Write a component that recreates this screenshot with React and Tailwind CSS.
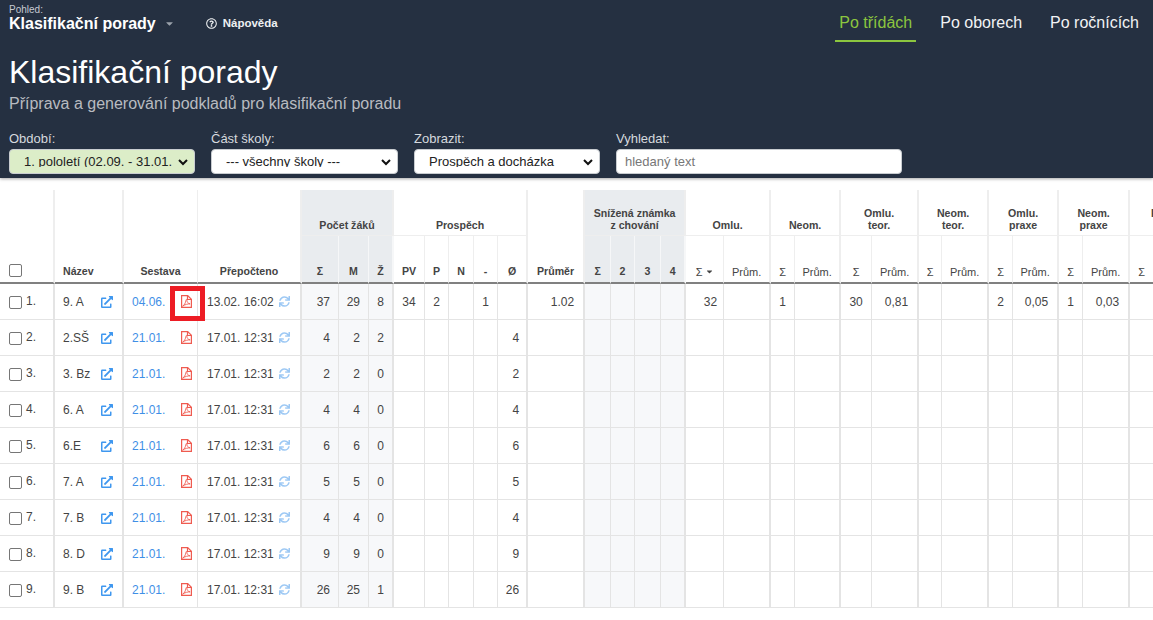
import { FaExternalLinkAlt, FaSync, FaRegQuestionCircle, FaCaretDown } from "react-icons/fa";

const widths = [55, 69, 74, 104, 37, 30, 25, 31, 24, 25, 24, 30, 57, 26, 24, 26, 25, 38, 47, 24, 46, 31, 47, 23, 47, 24, 46, 24, 47, 24, 48];

const groups = [
  { label: "Počet žáků", span: 3, shade: true },
  { label: "Prospěch", span: 5 },
  { label: "", span: 1, noBottom: true },
  { label: ["Snížená známka", "z chování"], span: 4, shade: true },
  { label: "Omlu.", span: 2 },
  { label: "Neom.", span: 2 },
  { label: ["Omlu.", "teor."], span: 2 },
  { label: ["Neom.", "teor."], span: 2 },
  { label: ["Omlu.", "praxe"], span: 2 },
  { label: ["Neom.", "praxe"], span: 2 },
  { label: ["Pozd.", "teor."], span: 2 },
];

const rows = [
  { n: "1.", name: "9. A", report: "04.06.", calc: "13.02. 16:02", z: ["37", "29", "8"], first: true },
  { n: "2.", name: "2.SŠ", report: "21.01.", calc: "17.01. 12:31", z: ["4", "2", "2"], o: "4" },
  { n: "3.", name: "3. Bz", report: "21.01.", calc: "17.01. 12:31", z: ["2", "2", "0"], o: "2" },
  { n: "4.", name: "6. A", report: "21.01.", calc: "17.01. 12:31", z: ["4", "4", "0"], o: "4" },
  { n: "5.", name: "6.E", report: "21.01.", calc: "17.01. 12:31", z: ["6", "6", "0"], o: "6" },
  { n: "6.", name: "7. A", report: "21.01.", calc: "17.01. 12:31", z: ["5", "5", "0"], o: "5" },
  { n: "7.", name: "7. B", report: "21.01.", calc: "17.01. 12:31", z: ["4", "4", "0"], o: "4" },
  { n: "8.", name: "8. D", report: "21.01.", calc: "17.01. 12:31", z: ["9", "9", "0"], o: "9" },
  { n: "9.", name: "9. B", report: "21.01.", calc: "17.01. 12:31", z: ["26", "25", "1"], o: "26" },
];

// sloupce za "Přepočteno": index -> hodnoty prvniho radku
const firstRow = {
  7: ["34", "c"], 8: ["2", "c"], 10: ["1", "c"], 12: ["1.02", "r"], 17: ["32", "s"], 19: ["1", "c"],
  21: ["30", "c"], 22: ["0,81", "r"], 25: ["2", "c"], 26: ["0,05", "r"], 27: ["1", "c"], 28: ["0,03", "r"],
};

const align = { c: "text-center", r: "text-right pr-[9px]", s: "text-right pr-[6px]" };

const thick = new Set([0, 1, 3, 6, 11, 12, 16, 18, 20, 22, 24, 26, 28]);
const shaded = new Set([4, 5, 6, 13, 14, 15, 16]);
const subHead = ["Σ", "M", "Ž", "PV", "P", "N", "-", "Ø", "Průměr", "Σ", "2", "3", "4", "Σ", "Prům.", "Σ", "Prům.", "Σ", "Prům.", "Σ", "Prům.", "Σ", "Prům.", "Σ", "Prům.", "Σ", "Prům."];

function PdfIcon() {
  return (
    <svg viewBox="0 0 11 13" className="w-[11px] h-[13px] text-[#ef5b50]" fill="none" stroke="currentColor" strokeWidth="1.2">
      <path d="M.6.6h6.1l3.7 3.7v8.1H.6z" />
      <path d="M6.5.6v3.9h3.9" />
      <path d="M1.6 11.2c1.5-.8 3-3.2 3.4-6 .1-1 .9-1 .9 0 0 1.6.9 3.2 3.2 3.7-1.9-.2-5 .5-7.5 2.3z" strokeWidth=".9" />
    </svg>
  );
}

function Select({ label, value, width, green }) {
  return (
    <label className="flex flex-col">
      <span className="text-[13px] leading-[16px] text-[#d5d9de] mb-[2px]">{label}</span>
      <span className={`flex items-center h-[25px] rounded-[4px] border border-[#c8ccd0] overflow-hidden pl-[14px] pr-[5px] ${width} ${green ? "bg-[#dcedc8]" : "bg-white"}`}>
        <span className="flex-1 self-start h-[17px] whitespace-nowrap overflow-hidden text-[13px] leading-[23px] text-[#222]">{value}</span>
        <svg viewBox="0 0 12 12" className="w-[12px] h-[12px] shrink-0 ml-1 text-[#111]">
          <path d="M2 4l4 4 4-4" fill="none" stroke="currentColor" strokeWidth="2" />
        </svg>
      </span>
    </label>
  );
}

export default function App() {
  return (
    <div className="w-[1153px] h-[620px] overflow-hidden bg-white font-['Liberation_Sans',Arial,sans-serif] text-[#444]">
      <header className="h-[178px] bg-[#253041] shadow-[0_1px_3px_rgba(0,0,0,0.35)] px-[9px] flex flex-col relative">
        <div className="flex items-start h-[42px]">
          <div className="pt-[5px]">
            <div className="text-[10px] leading-[10px] text-[#c5cad1]">Pohled:</div>
            <div className="flex items-center text-[16px] leading-[17px] font-bold text-white">
              Klasifikační porady
              <FaCaretDown className="ml-[8px] text-[#9aa1ab] text-[11px]" />
            </div>
          </div>
          <div className="flex items-center ml-[31px] mt-[16px] text-[11.5px] leading-[14px] font-bold text-[#eef0f2]">
            <FaRegQuestionCircle className="mr-[6px] text-[11px]" />
            Nápověda
          </div>
          <nav className="ml-auto flex text-[16px] text-[#f2f3f5] mr-[-9px]">
            <a className="w-[81px] h-[42px] leading-[45px] text-center text-[#8cc63f] border-b-2 border-[#8cc63f]">Po třídách</a>
            <a className="ml-[24px] leading-[45px]">Po oborech</a>
            <a className="ml-[28px] mr-[14px] leading-[45px]">Po ročnících</a>
          </nav>
        </div>
        <h1 className="mt-[11px] text-[32px] leading-[38px] text-white">Klasifikační porady</h1>
        <p className="text-[16px] leading-[20px] text-[#b8bbc0] mt-[3px]">Příprava a generování podkladů pro klasifikační poradu</p>
        <div className="flex mt-[17px] gap-[16px]">
          <Select label="Období:" value="1. pololetí (02.09. - 31.01." width="w-[186px]" green />
          <Select label="Část školy:" value="--- všechny školy ---" width="w-[187px]" />
          <Select label="Zobrazit:" value="Prospěch a docházka" width="w-[186px]" />
          <label className="flex flex-col">
            <span className="text-[13px] leading-[16px] text-[#d5d9de] mb-[2px]">Vyhledat:</span>
            <input readOnly placeholder="hledaný text" className="w-[286px] h-[25px] rounded-[4px] border border-[#c8ccd0] bg-white pl-[8px] pr-[7px] pb-[1px] text-[13px] outline-none placeholder:text-[#777]" />
          </label>
        </div>
      </header>

      <table className="mt-[12px] table-fixed border-separate border-spacing-0 w-[1201px] text-[12px]">
        <colgroup>
          {widths.map((w, i) => (
            <col key={i} style={{ width: w }} />
          ))}
        </colgroup>
        <thead className="text-[#444]">
          <tr className="h-[46px]">
            {[0, 1, 2, 3].map((i) => (
              <th key={i} className={thick.has(i) ? "border-r-2 border-[#eeeeee]" : "border-r border-[#eeeeee]"} />
            ))}
            {groups.map((g, i) => (
              <th
                key={i}
                colSpan={g.span}
                className={`align-bottom pb-[4px] text-[10.6px] leading-[12px] font-bold border-r-2 border-[#eeeeee] ${g.noBottom ? "" : "border-b"} ${g.shade ? "bg-[#e9ecef]" : ""}`}
              >
                {Array.isArray(g.label) ? g.label.map((l) => <div key={l}>{l}</div>) : g.label}
              </th>
            ))}
          </tr>
          <tr className="h-[48px]">
            <th className="border-b-2 border-b-[#808080] border-r-2 border-r-[#eeeeee] text-left pl-[9px] align-bottom pb-[5px]">
              <span className="block w-[13px] h-[13px] rounded-[2px] border border-[#767676] bg-white" />
            </th>
            <th className="border-b-2 border-b-[#808080] border-r-2 border-r-[#eeeeee] text-left pl-[8px] align-bottom pb-[2px] text-[10.6px] font-bold">Název</th>
            <th className="border-b-2 border-b-[#808080] border-r border-r-[#eeeeee] align-bottom pb-[2px] text-[10.6px] font-bold">Sestava</th>
            <th className="border-b-2 border-b-[#808080] border-r-2 border-r-[#eeeeee] align-bottom pb-[2px] text-[10.6px] font-bold">Přepočteno</th>
            {subHead.map((h, idx) => {
              const i = idx + 4;
              const bold = i < 17;
              return (
                <th
                  key={i}
                  className={`border-b-2 border-b-[#808080] align-bottom pb-[2px] ${bold ? "font-bold text-[10.6px]" : "font-normal text-[11px]"} ${thick.has(i) ? "border-r-2" : "border-r"} ${shaded.has(i) ? "bg-[#e9ecef] border-r-[#f6f7f8]" : "border-r-[#eeeeee]"}`}
                >
                  {i === 17 ? (
                    <span className="inline-flex items-center justify-center">
                      Σ
                      <FaCaretDown className="ml-[2px] text-[9px]" />
                    </span>
                  ) : (
                    h
                  )}
                </th>
              );
            })}
          </tr>
        </thead>
        <tbody className="text-[12px]">
          {rows.map((r) => (
            <tr key={r.n} className="h-[36px]">
              <td className="border-b border-[#e4e4e4] border-r-2 border-r-[#e4e4e4] pl-[9px]">
                <span className="flex items-start">
                  <span className="block w-[13px] h-[13px] rounded-[2px] border border-[#767676] bg-white mt-[1px]" />
                  <span className="ml-[4px] text-[12px] leading-[12px]">{r.n}</span>
                </span>
              </td>
              <td className="border-b border-[#e4e4e4] border-r-2 border-r-[#e4e4e4] pl-[8px] pr-[9px]">
                <span className="flex items-center justify-between">
                  {r.name}
                  <FaExternalLinkAlt className="text-[12px] text-[#3f97ef]" />
                </span>
              </td>
              <td className="border-b border-[#e4e4e4] border-r border-r-[#e4e4e4] pl-[8px] pr-[5px]">
                <span className="flex items-center justify-between text-[#3f8fe6]">
                  {r.report}
                  <span className="relative block w-[11px] h-[13px]">
                    <PdfIcon />
                    {r.first && <span className="absolute left-[-11px] top-[-9px] w-[35px] h-[35px] border-[5px] border-[#ed1c24]" />}
                  </span>
                </span>
              </td>
              <td className="border-b border-[#e4e4e4] border-r-2 border-r-[#e4e4e4] pl-[9px] pr-[10px]">
                <span className="flex items-center justify-between whitespace-nowrap">
                  {r.calc}
                  <FaSync className="text-[11px] text-[#9cc8f4]" />
                </span>
              </td>
              {widths.slice(4).map((_, idx) => {
                const i = idx + 4;
                const base = `border-b border-[#e4e4e4] ${thick.has(i) ? "border-r-2" : "border-r"} border-r-[#e4e4e4] ${shaded.has(i) ? "bg-[#f7f8fa]" : ""}`;
                if (i <= 6) {
                  return (
                    <td key={i} className={`${base} text-right pr-[8px]`}>
                      {r.z[i - 4]}
                    </td>
                  );
                }
                if (i === 11) {
                  return (
                    <td key={i} className={`${base} text-right pr-[7px]`}>
                      {r.o}
                    </td>
                  );
                }
                const v = r.first ? firstRow[i] : null;
                return (
                  <td key={i} className={`${base} ${v ? align[v[1]] : ""}`}>
                    {v ? v[0] : ""}
                  </td>
                );
              })}
            </tr>
          ))}
        </tbody>
      </table>
    </div>
  );
}
